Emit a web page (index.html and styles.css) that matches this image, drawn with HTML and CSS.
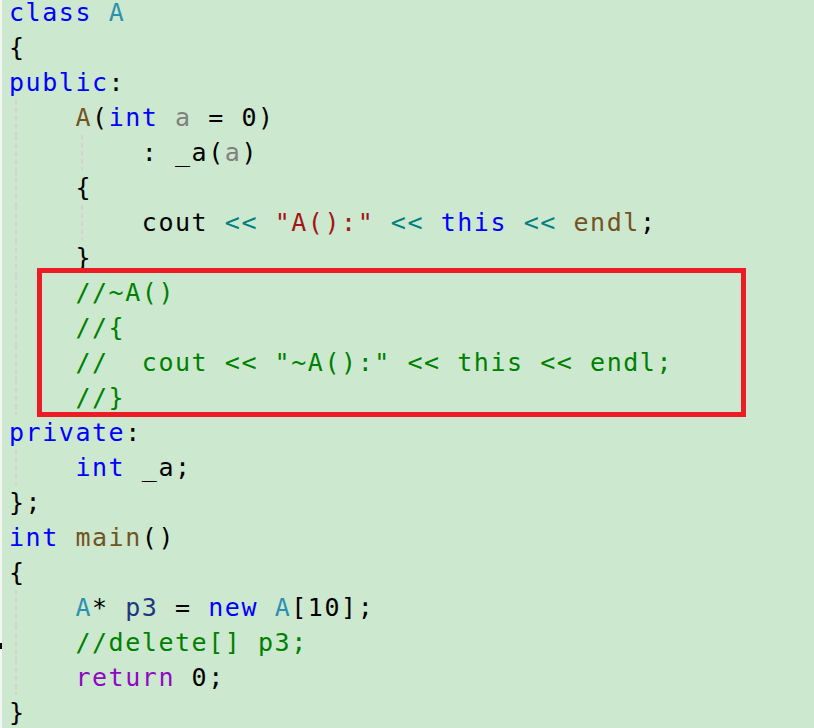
FILE: index.html
```html
<!DOCTYPE html>
<html>
<head>
<meta charset="utf-8">
<link rel="stylesheet" href="styles.css">
</head>
<body>
<div class="editor">
  <div class="strip"><span class="mark"></span></div>
  <div class="code">
    <div class="ln"><span class="kw">class</span> <span class="ty">A</span></div>
    <div class="ln">{</div>
    <div class="ln"><span class="kw">public</span>:</div>
    <div class="ln"><span class="ind g">    </span><span class="fn">A</span>(<span class="kw">int</span> <span class="pa">a</span> = 0)</div>
    <div class="ln"><span class="ind g">    </span><span class="ind g">    </span>: _a(<span class="pa">a</span>)</div>
    <div class="ln"><span class="ind g">    </span>{</div>
    <div class="ln"><span class="ind g">    </span><span class="ind g">    </span>cout <span class="op">&lt;&lt;</span> <span class="st">"A():"</span> <span class="op">&lt;&lt;</span> <span class="kw">this</span> <span class="op">&lt;&lt;</span> <span class="fn">endl</span>;</div>
    <div class="ln"><span class="ind g">    </span>}</div>
    <div class="ln"><span class="ind g">    </span><span class="cm">//~A()</span></div>
    <div class="ln"><span class="ind g">    </span><span class="cm">//{</span></div>
    <div class="ln"><span class="ind g">    </span><span class="cm">//  cout &lt;&lt; "~A():" &lt;&lt; this &lt;&lt; endl;</span></div>
    <div class="ln"><span class="ind g">    </span><span class="cm">//}</span></div>
    <div class="ln"><span class="kw">private</span>:</div>
    <div class="ln"><span class="ind g">    </span><span class="kw">int</span> _a;</div>
    <div class="ln">};</div>
    <div class="ln"><span class="kw">int</span> <span class="fn">main</span>()</div>
    <div class="ln">{</div>
    <div class="ln"><span class="ind g">    </span><span class="ty">A</span>* <span class="lv">p3</span> = <span class="kw">new</span> <span class="ty">A</span>[10];</div>
    <div class="ln"><span class="ind g">    </span><span class="cm">//delete[] p3;</span></div>
    <div class="ln"><span class="ind g">    </span><span class="rt">return</span> 0;</div>
    <div class="ln">}</div>
  </div>
</div>
<div class="highlight"></div>
</body>
</html>
```

FILE: styles.css
```css
html, body {
  margin: 0;
  padding: 0;
  background: #cce8cf;
  height: 100%;
  overflow: hidden;
}

body {
  position: relative;
}

.editor {
  display: flex;
  height: 728px;
}

.strip {
  width: 2px;
  flex: none;
  background: #f2f5f2;
  position: relative;
}

.mark {
  position: absolute;
  left: 0;
  top: 643px;
  width: 2px;
  height: 6px;
  background: #000;
}

.code {
  padding-left: 7px;
  margin-top: -5px;
  font-family: "DejaVu Sans Mono", monospace;
  font-size: 25px;
  letter-spacing: 1.55px;
  line-height: 35px;
  color: #000;
}

.ln {
  height: 35px;
  white-space: pre;
}

.ind {
  display: inline-block;
  white-space: pre;
  height: 35px;
  vertical-align: baseline;
}

.g {
  background-image: repeating-linear-gradient(to bottom, #d8d0d3 0 5px, transparent 5px 8px);
  background-size: 2px 100%;
  background-repeat: no-repeat;
  background-position: 6px 0;
}

.kw { color: #0000ff; }
.ty { color: #2b91af; }
.fn { color: #74531f; }
.pa { color: #808080; }
.op { color: #008080; }
.st { color: #a31515; }
.cm { color: #008000; }
.lv { color: #1f377f; }
.rt { color: #8f08c4; }

.highlight {
  position: absolute;
  left: 37px;
  top: 268px;
  width: 709px;
  height: 149px;
  box-sizing: border-box;
  border: 5px solid #ed1c24;
}
```
